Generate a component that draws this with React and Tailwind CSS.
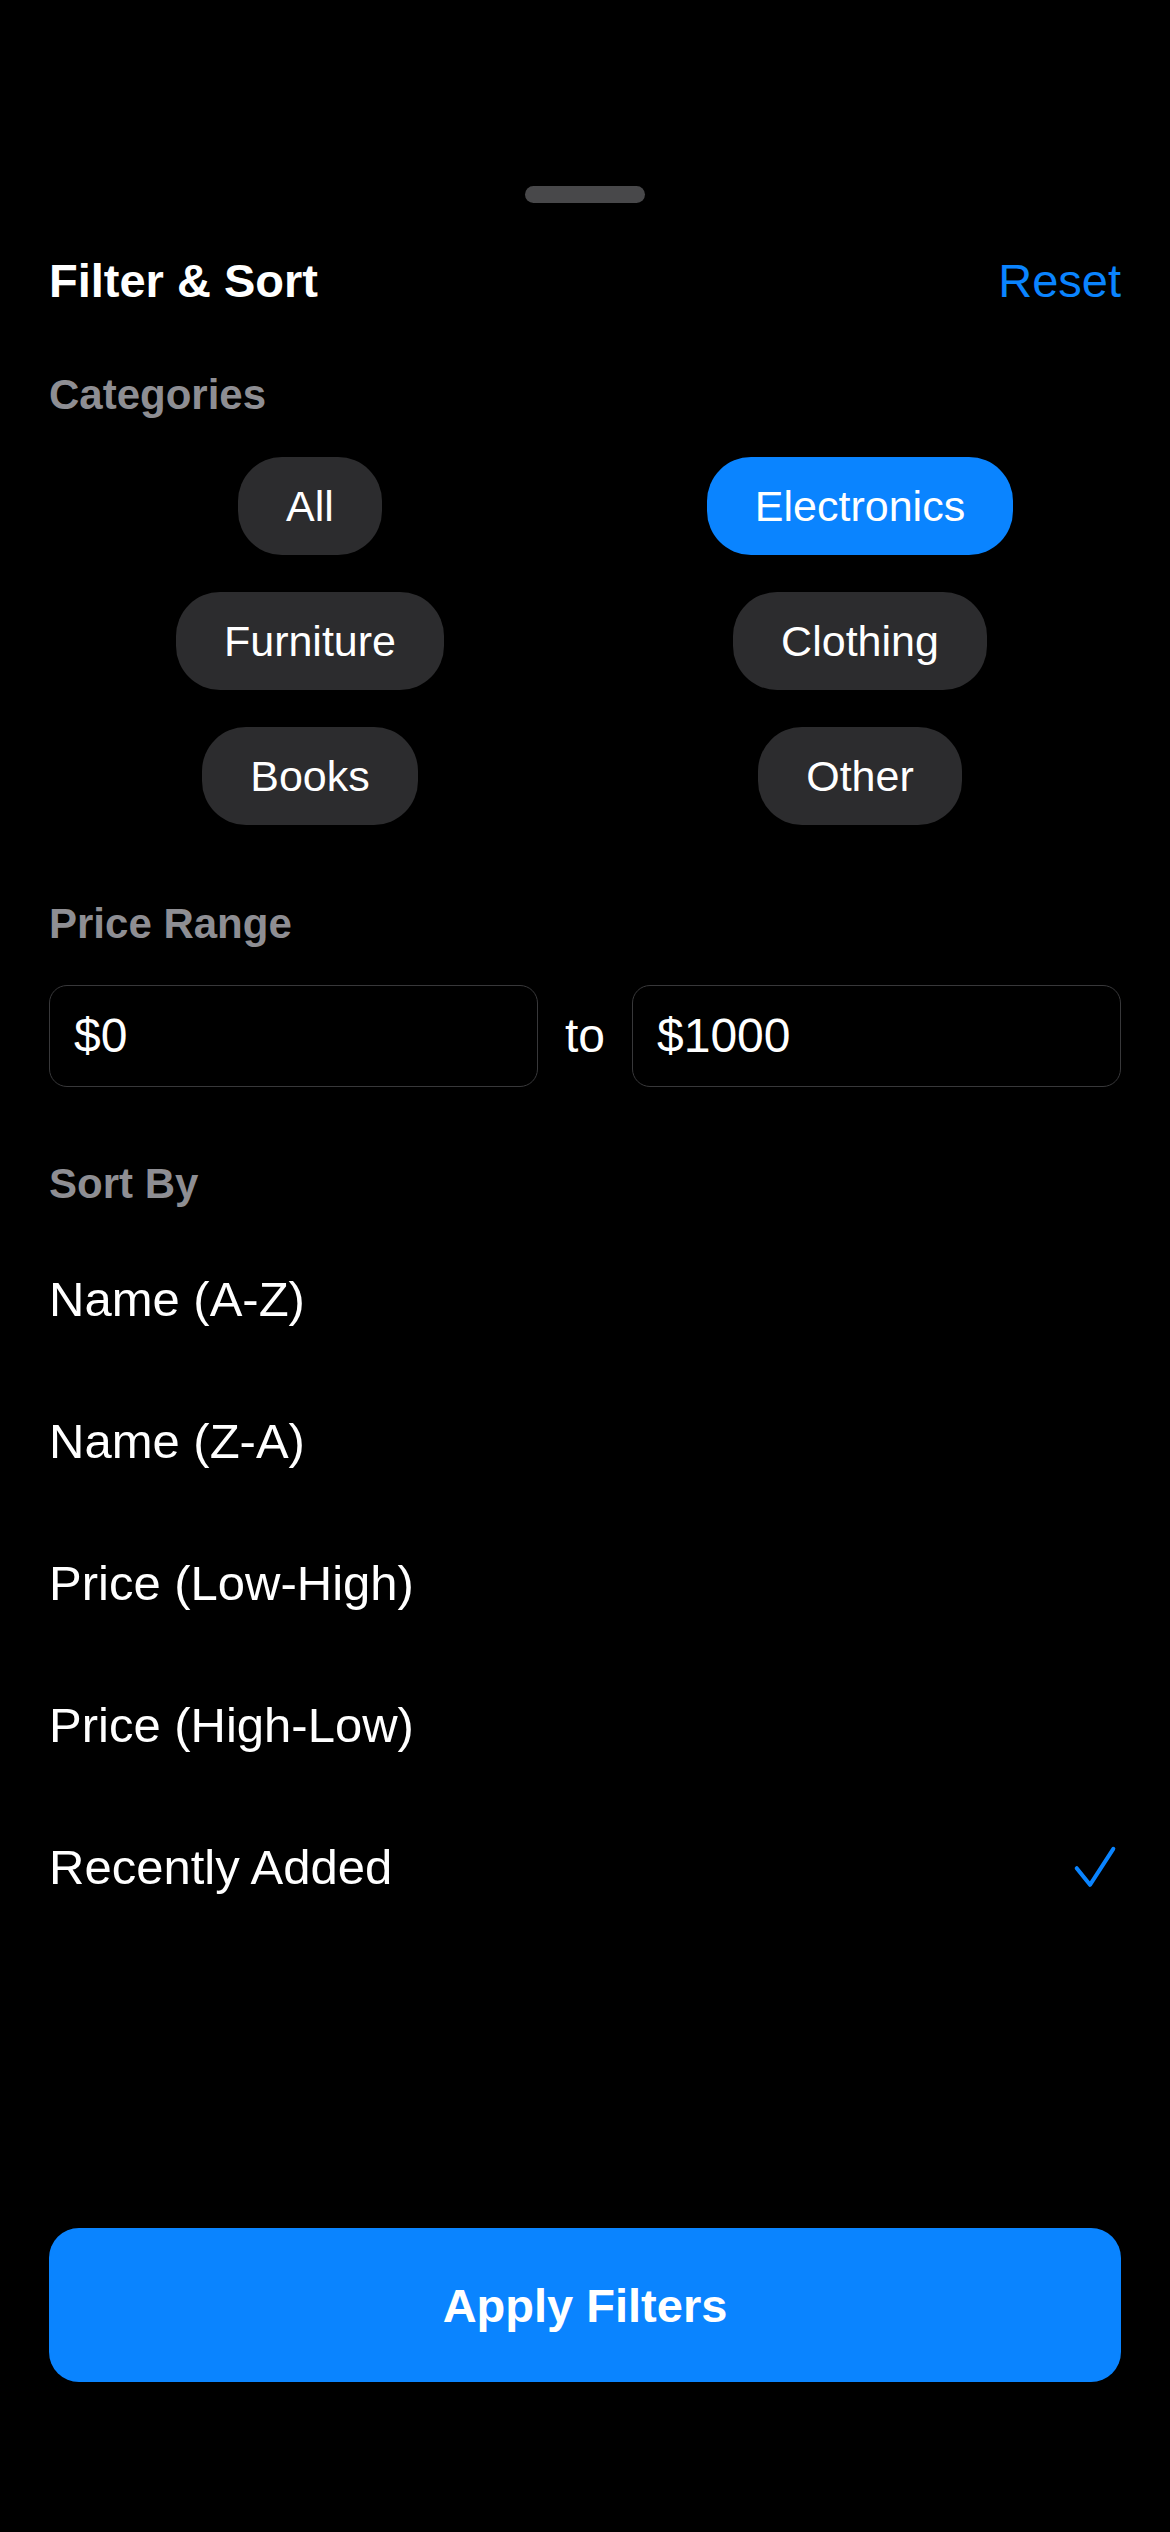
import React from 'react';

const categories = [
  { name: 'All', active: false },
  { name: 'Electronics', active: true },
  { name: 'Furniture', active: false },
  { name: 'Clothing', active: false },
  { name: 'Books', active: false },
  { name: 'Other', active: false },
];

const sortOptions = [
  { label: 'Name (A-Z)', selected: false },
  { label: 'Name (Z-A)', selected: false },
  { label: 'Price (Low-High)', selected: false },
  { label: 'Price (High-Low)', selected: false },
  { label: 'Recently Added', selected: true },
];

function Check() {
  return (
    <svg width="48" height="48" viewBox="0 0 48 48" fill="none">
      <path
        d="M3.7 25.2 L17 41.8 L40.3 5.8"
        stroke="#0a84ff"
        strokeWidth="4"
        strokeLinecap="round"
        strokeLinejoin="round"
      />
    </svg>
  );
}

export default function App() {
  return (
    <div className="min-h-[2532px] w-full bg-black px-[49px] pt-[186px] text-white font-['Liberation_Sans',Arial,sans-serif]">
      <div className="mx-auto h-[17px] w-[120px] rounded-full bg-[#48484a]" />

      <div className="mt-[53px] flex h-[48px] items-center justify-between">
        <h1 className="text-[47px] font-bold leading-none">Filter &amp; Sort</h1>
        <button className="text-[47px] leading-none text-[#0a84ff]">Reset</button>
      </div>

      <h2 className="mt-[70px] flex h-[42px] items-center text-[42px] font-bold leading-none text-[#8e8e93]">
        Categories
      </h2>

      <div className="mt-[41px] grid grid-cols-2 justify-items-center gap-x-[28px] gap-y-[37px]">
        {categories.map((c) => (
          <div
            key={c.name}
            className={
              c.active
                ? 'flex h-[98px] items-center rounded-[44px] bg-[#0a84ff] px-[48px] text-[43px] leading-none text-white'
                : 'flex h-[98px] items-center rounded-[44px] bg-[#2c2c2e] px-[48px] text-[43px] leading-none text-white'
            }
          >
            {c.name}
          </div>
        ))}
      </div>

      <h2 className="mt-[78px] flex h-[42px] items-center text-[42px] font-bold leading-none text-[#8e8e93]">
        Price Range
      </h2>

      <div className="mt-[40px] flex items-center gap-[27px]">
        <div className="flex h-[102px] flex-1 items-center rounded-[18px] border border-[#38383a] px-[24px] text-[48px] leading-none">
          $0
        </div>
        <span className="text-[48px] leading-none">to</span>
        <div className="flex h-[102px] flex-1 items-center rounded-[18px] border border-[#38383a] px-[24px] text-[48px] leading-none">
          $1000
        </div>
      </div>

      <h2 className="mt-[76px] flex h-[42px] items-center text-[42px] font-bold leading-none text-[#8e8e93]">
        Sort By
      </h2>

      <div className="mt-[23px] flex flex-col">
        {sortOptions.map((o) => (
          <div key={o.label} className="flex h-[142px] items-center justify-between">
            <span className="text-[49px] leading-none">{o.label}</span>
            {o.selected && <Check />}
          </div>
        ))}
      </div>

      <button className="mt-[290px] flex h-[154px] w-full items-center justify-center rounded-[30px] bg-[#0a84ff] text-[47px] font-bold leading-none text-white">
        Apply Filters
      </button>
    </div>
  );
}
